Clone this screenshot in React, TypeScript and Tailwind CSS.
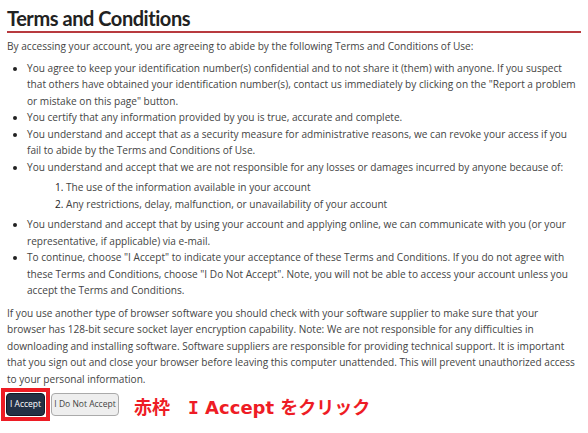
export default function App() {
  const bullets = [
    'You agree to keep your identification number(s) confidential and to not share it (them) with anyone. If you suspect that others have obtained your identification number(s), contact us immediately by clicking on the "Report a problem or mistake on this page" button.',
    "You certify that any information provided by you is true, accurate and complete.",
    "You understand and accept that as a security measure for administrative reasons, we can revoke your access if you fail to abide by the Terms and Conditions of Use.",
  ];

  return (
    <div className="w-[588px] h-[433px] bg-white px-[7px] font-['Open_Sans',sans-serif] text-[#444] text-[10.1px] leading-[16.5px]">
      {/* Header */}
      <h2 className="pt-[6px] pb-[1px] border-b-2 border-[#b83a3f] font-['Lato',sans-serif] text-[20px] leading-[24px] tracking-[-0.45px] font-bold text-[#222]">
        Terms and Conditions
      </h2>

      <p className="mt-[5px]">
        By accessing your account, you are agreeing to abide by the following Terms and Conditions of Use:
      </p>

      <ul className="mt-[5px] list-disc pl-[20px] marker:text-[#222]">
        {bullets.map((b) => (
          <li key={b}>{b}</li>
        ))}
        <li>
          You understand and accept that we are not responsible for any losses or damages incurred by anyone because of:
          <ol className="my-[4px] list-decimal pl-[39px]">
            <li>The use of the information available in your account</li>
            <li>Any restrictions, delay, malfunction, or unavailability of your account</li>
          </ol>
        </li>
        <li>
          You understand and accept that by using your account and applying online, we can communicate with you (or your representative, if applicable) via e-mail.
        </li>
        <li>
          To continue, choose "I Accept" to indicate your acceptance of these Terms and Conditions. If you do not agree with these Terms and Conditions, choose "I Do Not Accept". Note, you will not be able to access your account unless you accept the Terms and Conditions.
        </li>
      </ul>

      <p className="mt-[6px] pr-[5px]">
        If you use another type of browser software you should check with your software supplier to make sure that your browser has 128-bit secure socket layer encryption capability. Note: We are not responsible for any difficulties in downloading and installing software. Software suppliers are responsible for providing technical support. It is important that you sign out and close your browser before leaving this computer unattended. This will prevent unauthorized access to your personal information.
      </p>

      {/* Buttons */}
      <div className="mt-px flex items-center">
        <div className="-ml-[6px] border-4 border-[#ed1c24] p-px">
          <button className="h-[23px] w-[39px] rounded-sm bg-[#233145] text-white text-[8.5px] border border-[#111a26]">
            I Accept
          </button>
        </div>
        <button className="ml-[1px] h-[23px] w-[68px] rounded-sm bg-[#eeeeee] text-[#444] text-[8.5px] border border-[#aaa]">
          I Do Not Accept
        </button>
        <span className="ml-[15px] pt-[7px] text-[18px] leading-[24px] font-bold text-[#ee1c25] font-['DejaVu_Sans','Noto_Sans_CJK_JP',sans-serif]">
          赤枠　<span className="font-['DejaVu_Sans_Mono',monospace]">I</span> Accept をクリック
        </span>
      </div>
    </div>
  );
}
